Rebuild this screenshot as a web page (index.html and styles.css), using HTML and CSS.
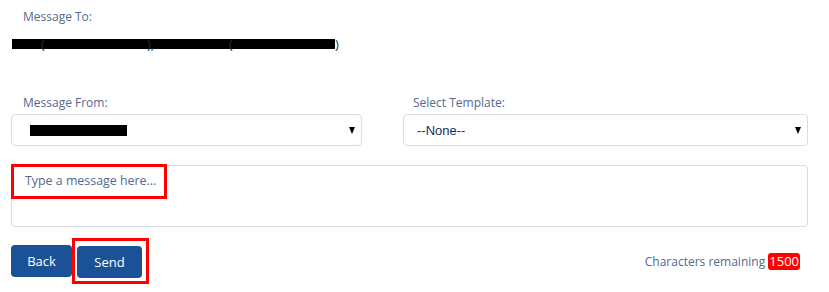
FILE: index.html
```html
<!DOCTYPE html>
<html lang="en">
<head>
    <meta charset="UTF-8">
    <title>Send Message</title>
    <link rel="stylesheet" href="styles.css">
</head>
<body>
    <div class="composer">
        <div class="field-label to-label">Message To:</div>
        <div class="recipients">
            <span class="gap g1"></span><span class="paren">(</span><span class="gap g2"></span><span class="paren">),</span><span class="gap g3"></span><span class="paren">(</span><span class="gap g4"></span><span class="paren">)</span>
        </div>

        <div class="select-row">
            <div class="select-col from-col">
                <div class="field-label">Message From:</div>
                <div class="select-box">
                    <span class="sender"></span>
                    <span class="arrow"></span>
                </div>
            </div>
            <div class="select-col template-col">
                <div class="field-label">Select Template:</div>
                <div class="select-box">
                    <span class="select-text">--None--</span>
                    <span class="arrow"></span>
                </div>
            </div>
        </div>

        <div class="message-box">
            <div class="placeholder">Type a message here...</div>
        </div>

        <div class="footer">
            <div class="buttons">
                <button class="btn back-btn">Back</button>
                <div class="highlight">
                    <button class="btn send-btn">Send</button>
                </div>
            </div>
            <div class="remaining">Characters remaining <span class="count">1500</span></div>
        </div>
    </div>
</body>
</html>
```

FILE: styles.css
```css
body {
    margin: 0;
    font-family: "Open Sans", Arial, sans-serif;
    font-size: 13px;
    color: #16325c;
    background: #fff;
}
.composer {
    padding: 0 21px 0 11px;
}
.field-label {
    color: #54698d;
    font-size: 12px;
    line-height: 16px;
    padding-left: 12px;
}
.to-label {
    padding-top: 9px;
}
.recipients {
    display: flex;
    align-items: center;
    height: 18px;
    margin-top: 10px;
    margin-left: 1px;
    color: #16325c;
    font-size: 13px;
}
.gap {
    display: inline-block;
    height: 10px;
    background: #000;
}
.g1 { width: 30px; }
.g2 { width: 106px; }
.g3 { width: 82px; }
.g4 { width: 105px; }
.paren {
    display: inline-block;
    width: 0;
    white-space: nowrap;
    line-height: 18px;
    position: relative;
    left: -1px;
}
.paren:last-child {
    left: 0;
}
.select-row {
    display: flex;
    gap: 41px;
    margin-top: 42px;
}
.from-col {
    width: 351px;
}
.template-col {
    flex: 1;
}
.template-col .field-label {
    padding-left: 10px;
}
.select-box {
    display: flex;
    align-items: center;
    justify-content: space-between;
    height: 30px;
    margin-top: 3px;
    border: 1px solid #d8dde6;
    border-radius: 4px;
    padding: 0 6px 0 13px;
}
.sender {
    display: inline-block;
    width: 97px;
    height: 11px;
    margin-left: 5px;
    background: #000;
}
.select-text {
    font-family: "Liberation Sans", Arial, sans-serif;
    font-size: 13px;
    color: #16325c;
}
.arrow {
    width: 0;
    height: 0;
    border-left: 3px solid transparent;
    border-right: 3px solid transparent;
    border-top: 7px solid #000;
}
.message-box {
    height: 60px;
    margin-top: 19px;
    border: 1px solid #d8dde6;
    border-radius: 4px;
}
.placeholder {
    display: inline-block;
    margin: -2px 0 0 -1px;
    padding: 5px 8px 6px 11px;
    border: 3px solid #f00;
    color: #54698d;
    font-size: 12.4px;
    line-height: 18px;
}
.footer {
    display: flex;
    align-items: center;
    justify-content: space-between;
    margin-top: 11px;
}
.buttons {
    display: flex;
    align-items: center;
}
.highlight {
    border: 3px solid #f00;
    padding: 5px 4px 3px 2px;
}
.btn {
    height: 32px;
    padding: 0;
    border: none;
    border-radius: 4px;
    background: #1b5297;
    color: #fff;
    font-family: "Open Sans", Arial, sans-serif;
    font-size: 13px;
}
.back-btn {
    width: 61px;
}
.send-btn {
    width: 65px;
}
.remaining {
    color: #54698d;
    font-size: 12px;
    margin-right: 8px;
}
.count {
    display: inline-block;
    background: #f00;
    color: #fff;
    border-radius: 3px;
    padding: 0 1px;
    font-size: 13px;
    line-height: 17px;
}
```
